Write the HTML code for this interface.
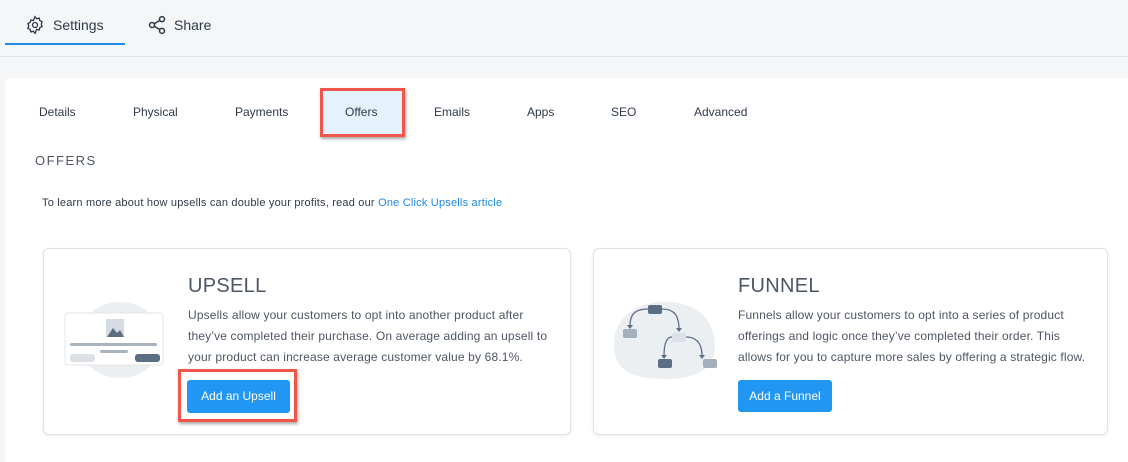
<!DOCTYPE html>
<html><head><style>
*{margin:0;padding:0;box-sizing:border-box}
html,body{width:1128px;height:462px;overflow:hidden}
body{background:#f5f6f8;font-family:"Liberation Sans",sans-serif;color:#2f3a48;position:relative}
.a{position:absolute}
.top{left:0;top:0;width:1128px;height:57px;border-bottom:1px solid #e2e5ea}
.panel{left:5px;top:78px;width:1130px;height:400px;background:#fff;border-radius:6px}
.tab{top:105px;font-size:12px;color:#2f3a48}
.card{background:#fff;border:1px solid #dfe2e6;border-radius:6px;box-shadow:0 1px 3px rgba(0,0,0,.08)}
.title{font-size:20px;color:#4d5663;letter-spacing:.3px}
.body{font-size:12px;letter-spacing:.15px;line-height:21px;color:#4d5663;white-space:nowrap}
.btn{background:#2196f3;color:#fff;font-size:12px;border-radius:3px;text-align:center;line-height:32px}
</style></head><body>
<div class="a top"></div>
<svg class="a" style="left:25px;top:15px" width="20" height="20" viewBox="0 0 24 24" fill="none" stroke="#2f3a48" stroke-width="1.6"><circle cx="12" cy="12" r="3"/><path d="M12 2l2 2.5 3-.8.8 3L20.5 8l-1 2.9 1 2.9-2.7 1.3-.8 3-3-.8L12 22l-2-2.5-3 .8-.8-3L3.5 16l1-2.9-1-2.9 2.7-1.3.8-3 3 .8z"/></svg>
<div class="a" style="left:53px;top:17px;font-size:14px">Settings</div>
<div class="a" style="left:5px;top:43px;width:120px;height:2px;background:#1e88e5"></div>
<svg class="a" style="left:147px;top:15px" width="20" height="20" viewBox="0 0 24 24" fill="none" stroke="#2f3a48" stroke-width="1.8"><circle cx="18" cy="5" r="3"/><circle cx="6" cy="12" r="3"/><circle cx="18" cy="19" r="3"/><path d="M8.6 10.5l6.8-4M8.6 13.5l6.8 4"/></svg>
<div class="a" style="left:174px;top:17px;font-size:14px">Share</div>
<div class="a panel"></div>
<div class="a" style="left:320px;top:88px;width:85px;height:49px;background:#e3f2fd;border:3px solid #f0564a;box-shadow:1px 2px 3px rgba(0,0,0,.35)"></div>
<div class="a tab" style="left:39px">Details</div>
<div class="a tab" style="left:133px">Physical</div>
<div class="a tab" style="left:235px">Payments</div>
<div class="a tab" style="left:345px">Offers</div>
<div class="a tab" style="left:434px">Emails</div>
<div class="a tab" style="left:527px">Apps</div>
<div class="a tab" style="left:611px">SEO</div>
<div class="a tab" style="left:694px">Advanced</div>
<div class="a" style="left:35px;top:153px;font-size:13px;letter-spacing:1.5px;color:#4d5663">OFFERS</div>
<div class="a" style="left:42px;top:197px;font-size:11px;letter-spacing:.2px;color:#2f3a48">To learn more about how upsells can double your profits, read our <span style="color:#1e88e5">One Click Upsells article</span></div>

<div class="a card" style="left:43px;top:248px;width:528px;height:187px"></div>
<svg class="a" style="left:60px;top:300px" width="110" height="80"><ellipse cx="60" cy="40" rx="42" ry="38" fill="#eceff2"/><rect x="5" y="13" width="98" height="52" rx="3" fill="#fff" stroke="#e3e6ea"/><rect x="46" y="19" width="18" height="18" fill="#d5dbe1"/><path d="M47 37l6-9 4 5 3-3 4 7z" fill="#5b6e83"/><rect x="10" y="43" width="87" height="3" rx="1.5" fill="#a9b4bf"/><rect x="40" y="50" width="28" height="3" rx="1.5" fill="#a9b4bf"/><rect x="10" y="54" width="25" height="8" rx="3" fill="#dde1e6"/><rect x="75" y="54" width="25" height="8" rx="3" fill="#5b6e83"/></svg>
<div class="a title" style="left:188px;top:275px">UPSELL</div>
<div class="a body" style="left:188px;top:305px">Upsells allow your customers to opt into another product after<br>they’ve completed their purchase. On average adding an upsell to<br>your product can increase average customer value by 68.1%.</div>
<div class="a" style="left:178px;top:369px;width:119px;height:53px;border:3px solid #f0564a;box-shadow:1px 2px 3px rgba(0,0,0,.35)"></div>
<div class="a btn" style="left:187px;top:380px;width:103px;height:33px">Add an Upsell</div>

<div class="a card" style="left:593px;top:248px;width:515px;height:187px"></div>
<svg class="a" style="left:610px;top:300px" width="110" height="80"><path d="M4 45C4 12 35 0 60 2c30 2 45 20 45 45 0 28-30 32-50 32C25 79 4 72 4 45z" fill="#eceff2"/><rect x="38" y="5" width="14" height="9" rx="2" fill="#5b6e83"/><rect x="13" y="29" width="14" height="9" rx="2" fill="#a3afbb"/><rect x="62" y="33" width="14" height="9" rx="2" fill="#dde1e6"/><rect x="48" y="59" width="14" height="9" rx="2" fill="#5b6e83"/><rect x="93" y="59" width="14" height="9" rx="2" fill="#a3afbb"/><g fill="none" stroke="#5b6e83" stroke-width="1.3"><path d="M38 9C25 9 20 14 20 26M52 9c12 0 17 6 17 21M62 37c-5 0-8 6-8 19M76 37c8 0 16 4 16 19"/></g><g fill="#5b6e83"><path d="M17 25h6l-3 4zM66 28h6l-3 4zM51 55h6l-3 4zM89 55h6l-3 4z"/></g></svg>
<div class="a title" style="left:738px;top:275px">FUNNEL</div>
<div class="a body" style="left:738px;top:305px">Funnels allow your customers to opt into a series of product<br>offerings and logic once they’ve completed their order. This<br>allows for you to capture more sales by offering a strategic flow.</div>
<div class="a btn" style="left:738px;top:380px;width:94px;height:32px">Add a Funnel</div>
</body></html>
